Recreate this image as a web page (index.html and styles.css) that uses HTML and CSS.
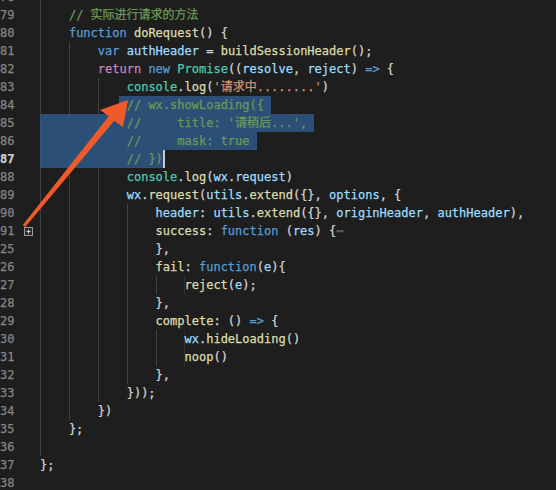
FILE: index.html
```html
<!DOCTYPE html>
<html>
<head>
<meta charset="utf-8">
<link rel="stylesheet" href="styles.css">
</head>
<body>
<div class="editor">
  <div class="line"><div class="gut"><span class="ln">78</span></div><div class="code d1"></div></div>
  <div class="line"><div class="gut"><span class="ln">79</span></div><div class="code d1">    <span class="cm">// 实际进行请求的方法</span></div></div>
  <div class="line"><div class="gut"><span class="ln">80</span></div><div class="code d1">    <span class="k">function</span> <span class="f">doRequest</span>() {</div></div>
  <div class="line"><div class="gut"><span class="ln">81</span></div><div class="code d2">        <span class="k">var</span> <span class="v">authHeader</span> = <span class="f">buildSessionHeader</span>();</div></div>
  <div class="line"><div class="gut"><span class="ln">82</span></div><div class="code d2">        <span class="c">return</span> <span class="k">new</span> <span class="t">Promise</span>((<span class="v">resolve</span>, <span class="v">reject</span>) <span class="k">=&gt;</span> {</div></div>
  <div class="line"><div class="gut"><span class="ln">83</span></div><div class="code d3">            <span class="t">console</span>.<span class="f">log</span>(<span class="s">'请求中........'</span>)</div></div>
  <div class="line"><div class="gut"><span class="ln">84</span></div><div class="code d3">           <span class="sel"> <span class="cm">// wx.showLoading({</span> </span></div></div>
  <div class="line"><div class="gut"><span class="ln">85</span></div><div class="code d3"><span class="sel">            <span class="cm">//     title: '请稍后...',</span> </span></div></div>
  <div class="line"><div class="gut"><span class="ln">86</span></div><div class="code d3"><span class="sel">            <span class="cm">//     mask: true</span> </span></div></div>
  <div class="line"><div class="gut"><span class="ln cur">87</span></div><div class="code d3"><span class="sel">            <span class="cm">// })</span></span><span class="caret"></span></div></div>
  <div class="line"><div class="gut"><span class="ln">88</span></div><div class="code d3">            <span class="t">console</span>.<span class="f">log</span>(<span class="v">wx</span>.<span class="v">request</span>)</div></div>
  <div class="line"><div class="gut"><span class="ln">89</span></div><div class="code d3">            <span class="v">wx</span>.<span class="f">request</span>(<span class="v">utils</span>.<span class="f">extend</span>({}, <span class="v">options</span>, {</div></div>
  <div class="line"><div class="gut"><span class="ln">90</span></div><div class="code d4">                <span class="v">header</span>: <span class="v">utils</span>.<span class="f">extend</span>({}, <span class="v">originHeader</span>, <span class="v">authHeader</span>),</div></div>
  <div class="line"><div class="gut"><span class="ln">91</span><span class="fold"><svg width="9" height="9" viewBox="0 0 9 9"><rect x="0.5" y="0.5" width="8" height="8" fill="#2a2a2a" stroke="#9a9a9a"/><path d="M2.5 4.5h4M4.5 2.5v4" stroke="#d0d0d0" stroke-width="1"/></svg></span></div><div class="code d4">                <span class="f">success</span>: <span class="k">function</span> (<span class="v">res</span>) {<span class="ell">⋯</span></div></div>
  <div class="line"><div class="gut"><span class="ln">25</span></div><div class="code d4">                },</div></div>
  <div class="line"><div class="gut"><span class="ln">26</span></div><div class="code d4">                <span class="f">fail</span>: <span class="k">function</span>(<span class="v">e</span>){</div></div>
  <div class="line"><div class="gut"><span class="ln">27</span></div><div class="code d5">                    <span class="f">reject</span>(<span class="v">e</span>);</div></div>
  <div class="line"><div class="gut"><span class="ln">28</span></div><div class="code d4">                },</div></div>
  <div class="line"><div class="gut"><span class="ln">29</span></div><div class="code d4">                <span class="f">complete</span>: () <span class="k">=&gt;</span> {</div></div>
  <div class="line"><div class="gut"><span class="ln">30</span></div><div class="code d5">                    <span class="v">wx</span>.<span class="f">hideLoading</span>()</div></div>
  <div class="line"><div class="gut"><span class="ln">31</span></div><div class="code d5">                    <span class="f">noop</span>()</div></div>
  <div class="line"><div class="gut"><span class="ln">32</span></div><div class="code d4">                },</div></div>
  <div class="line"><div class="gut"><span class="ln">33</span></div><div class="code d3">            }));</div></div>
  <div class="line"><div class="gut"><span class="ln">34</span></div><div class="code d2">        })</div></div>
  <div class="line"><div class="gut"><span class="ln">35</span></div><div class="code d1">    };</div></div>
  <div class="line"><div class="gut"><span class="ln">36</span></div><div class="code d1"></div></div>
  <div class="line"><div class="gut"><span class="ln">37</span></div><div class="code">};</div></div>
  <div class="line"><div class="gut"><span class="ln">38</span></div><div class="code"></div></div>
</div>
<svg class="arrow" width="556" height="490" viewBox="0 0 556 490">
  <polygon points="22.8,225 108.8,116.3 100,110 128,100 123,127 114.2,120.7 25.2,227" fill="#ef5a2a"/>
</svg>
</body>
</html>
```

FILE: styles.css
```css
html, body {
  margin: 0;
  padding: 0;
  background: #1e1e1e;
  overflow: hidden;
}
body {
  width: 556px;
  height: 490px;
  position: relative;
}
.editor {
  margin-top: -12px;
  font-family: "DejaVu Sans Mono", "Noto Sans CJK SC", monospace;
  font-size: 12px;
  color: #d4d4d4;
  -webkit-text-stroke: 0.25px;
}
.line {
  display: flex;
  height: 18px;
  line-height: 18px;
  overflow: hidden;
}
.gut {
  flex: none;
  width: 40px;
  display: flex;
  align-items: center;
}
.ln {
  width: 14.5px;
  text-align: right;
  color: #858585;
  flex: none;
}
.ln.cur {
  color: #d0d0d0;
  font-weight: bold;
}
.fold {
  margin-left: 9.5px;
  width: 9px;
  height: 9px;
  display: flex;
}
.code {
  flex: 1;
  white-space: pre;
  background-repeat: no-repeat;
  background-image: repeating-linear-gradient(to right, #404040 0 1px, transparent 1px 28.9px);
  background-size: 0 100%;
}
.d1 { background-size: 28.9px 100%; }
.d2 { background-size: 57.8px 100%; }
.d3 { background-size: 86.7px 100%; }
.d4 { background-size: 115.6px 100%; }
.d5 { background-size: 144.5px 100%; }
.sel {
  display: inline-block;
  height: 18px;
  vertical-align: top;
  background: rgba(47, 88, 136, 0.85);
}
.caret {
  display: inline-block;
  width: 2px;
  height: 18px;
  vertical-align: top;
  background: #c8c8c8;
}
.k { color: #569cd6; }
.c { color: #c586c0; }
.f { color: #dcdcaa; }
.v { color: #9cdcfe; }
.t { color: #4ec9b0; }
.s { color: #ce9178; }
.cm { color: #6a9955; }
.ell { color: #6e6e6e; }
.arrow {
  position: absolute;
  left: 0;
  top: 0;
  pointer-events: none;
}
```
